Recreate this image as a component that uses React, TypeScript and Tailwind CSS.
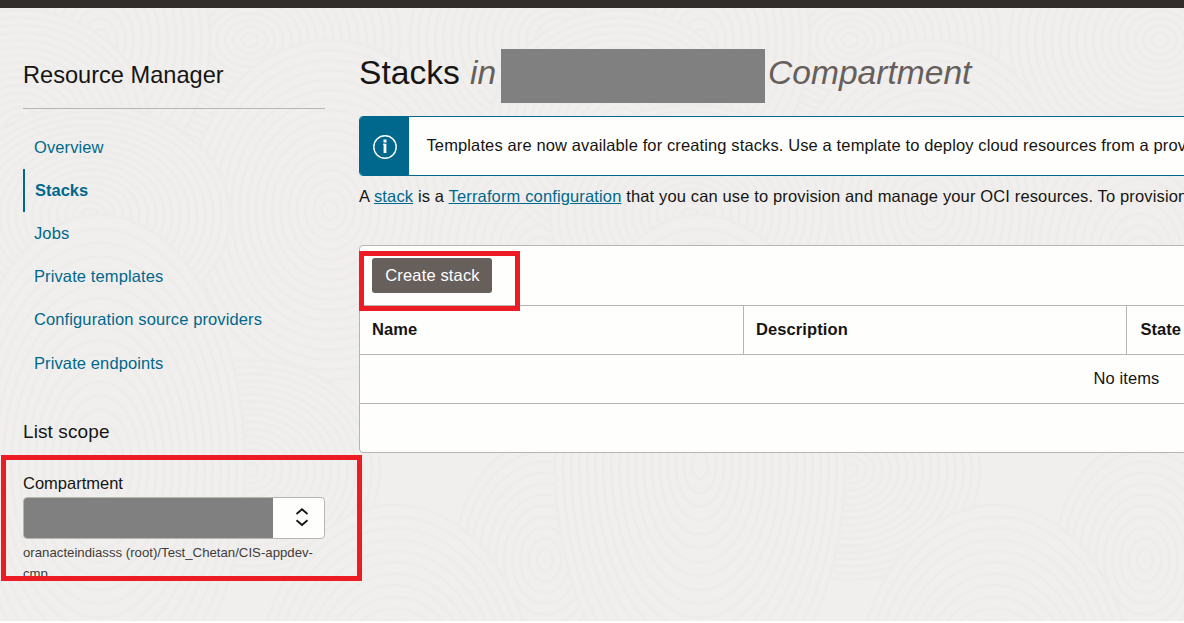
import React from "react";

type Ripple = { x: number; y: number; rx: number; ry: number };

const TILE = 600;

const ripples: Ripple[] = [
  { x: 560, y: 40, rx: 150, ry: 130 },
  { x: 250, y: 40, rx: 150, ry: 120 },
  { x: 100, y: 40, rx: 110, ry: 140 },
  { x: 330, y: 210, rx: 140, ry: 170 },
  { x: 540, y: 260, rx: 110, ry: 150 },
  { x: 20, y: 130, rx: 130, ry: 120 },
  { x: 90, y: 215, rx: 140, ry: 110 },
  { x: 250, y: 470, rx: 130, ry: 110 },
  { x: 545, y: 560, rx: 90, ry: 120 },
  { x: 100, y: 465, rx: 145, ry: 250 },
  { x: 395, y: 700, rx: 140, ry: 195 },
];

function RippleBackdrop() {
  const offsets = [-TILE, 0, TILE];
  return (
    <svg className="absolute inset-0 h-full w-full" aria-hidden="true">
      {ripples.map((r, i) =>
        offsets.map((dx) => {
          const count = Math.floor(r.rx / 8);
          return (
            <g key={`${i}-${dx}`}>
              {Array.from({ length: count }, (_, k) => {
                const f = 1 - k / count;
                return (
                  <ellipse
                    key={k}
                    cx={r.x + dx}
                    cy={r.y}
                    rx={r.rx * f}
                    ry={r.ry * f}
                    fill="#f0efed"
                    stroke="#edecea"
                    strokeWidth="3"
                  />
                );
              })}
            </g>
          );
        })
      )}
    </svg>
  );
}

const links = [
  { label: "Overview" },
  { label: "Stacks", active: true },
  { label: "Jobs" },
  { label: "Private templates" },
  { label: "Configuration source providers" },
  { label: "Private endpoints" },
];

function Sidebar() {
  return (
    <aside className="w-[302px] shrink-0">
      <h2 className="flex h-[101px] items-center border-b border-[#b8b4b0] pt-[36px] text-[23.6px]">
        Resource Manager
      </h2>
      <nav className="mt-[17px] flex h-[259px] flex-col text-[16.5px] tracking-[0.11px] text-[#00688c]">
        {links.map((l) => (
          <a
            key={l.label}
            className={
              l.active
                ? "flex h-[43px] items-center border-l-2 border-[#00688c] pl-[10px] font-bold tracking-normal"
                : "flex h-[43px] items-center pl-[11px] last:h-[44px] last:pt-px"
            }
          >
            {l.label}
          </a>
        ))}
      </nav>
      <h3 className="mt-[34px] text-[19px] leading-[26px] tracking-[0.1px]">List scope</h3>
      <div className="mt-[27px] text-[16.5px] leading-[22px]">Compartment</div>
      <div className="mt-[3px] flex h-[42px] justify-between overflow-hidden rounded border border-[#b8b4b0] bg-[#fefefc]">
        <div className="-my-px w-[249px] bg-[#808080]" />
        <svg className="mt-[9px] mr-[15px] h-5 w-[14px]" viewBox="0 0 14 20" fill="none" stroke="#161513" strokeWidth="1.8">
          <path d="M1.5 7 7 2.2 12.5 7M1.5 13.2 7 18l5.5-4.8" />
        </svg>
      </div>
      <div className="mt-[3px] h-[37px] text-[13.2px] leading-[21px] tracking-[0.01px] text-[#3f3b38]">
        oranacteindiasss (root)/Test_Chetan/CIS-appdev-
        <br />
        cmp
      </div>
    </aside>
  );
}

function Banner() {
  return (
    <div className="mt-[13px] flex h-[60px] w-[900px] overflow-hidden rounded border border-[#00688c] bg-[#fefefc]">
      <div className="flex w-[49px] items-center justify-center bg-[#00688c] pt-[2px]">
        <svg className="h-6 w-6" viewBox="0 0 24 24" fill="none" stroke="#fff">
          <circle cx="12" cy="12" r="11.2" strokeWidth="1.4" />
          <path d="M12 8.8v9.2" strokeWidth="2.8" />
          <path d="M10 9.300h2" strokeWidth="1" />
          <path d="M12 4.500v3" strokeWidth="3" />
        </svg>
      </div>
      <p className="pl-[17.5px] text-[16.5px] leading-[56px] tracking-[0.12px] whitespace-nowrap">
        Templates are now available for creating stacks. Use a template to deploy cloud resources from a provided
      </p>
    </div>
  );
}

function StackTable() {
  return (
    <section className="mt-[38px] w-[1534px] rounded border border-[#b8b4b0] bg-[#fefefc] text-[16.5px]">
      <div className="h-[59px] pt-3 pl-3">
        <button className="h-[35px] w-[120px] rounded-[3px] bg-[#665f5b] pl-[1px] tracking-[0.15px] text-white">Create stack</button>
      </div>
      <div className="flex h-[50px] border-y border-[#b8b4b0] leading-[47px] font-bold tracking-[0.1px]">
        <div className="w-[384px] border-r border-[#b8b4b0] pl-3">Name</div>
        <div className="w-[383px] border-r border-[#b8b4b0] pl-3">Description</div>
        <div className="pl-[13.5px] tracking-normal">State</div>
      </div>
      <div className="h-[49px] border-b border-[#b8b4b0] pl-[1px] text-center leading-[47px] tracking-[0.1px]">No items</div>
      <div className="h-[48px]" />
    </section>
  );
}

export default function App() {
  return (
    <div className="relative h-[623px] w-full overflow-hidden border-b-2 border-[#fefefe] bg-[#f0efed] font-['Liberation_Sans',Arial,sans-serif] text-[#161513]">
      <RippleBackdrop />
      <div className="relative">
        <header className="h-2 bg-[#312d2a]" />
        <div className="flex gap-[34px] pl-[23px]">
          <Sidebar />
          <main className="min-w-0 flex-1">
            <h1 className="flex h-[95px] items-start pt-[41px] text-[33.6px] leading-[48px] whitespace-nowrap">
              <span className="w-[111px] shrink-0">Stacks</span>
              <em className="w-[31px] shrink-0 text-[#665f5b]">in</em>
              <span className="mr-[3px] h-[54px] w-[264px] shrink-0 bg-[#808080]" />
              <em className="text-[#665f5b]">Compartment</em>
            </h1>
            <Banner />
            <p className="mt-[9px] text-[16.5px] leading-[22px] tracking-[0.14px] whitespace-nowrap">
              A <a className="text-[#00688c] underline">stack</a> is a{" "}
              <a className="text-[#00688c] underline">Terraform configuration</a> that you can use to provision and
              manage your OCI resources. To provision resources
            </p>
            <StackTable />
          </main>
        </div>
      </div>
      <div className="pointer-events-none absolute top-[455px] left-[1px] h-[126px] w-[361px] border-5 border-[#ed1c24]" />
      <div className="pointer-events-none absolute top-[251px] left-[359px] h-[60px] w-[161px] border-5 border-[#ed1c24]" />
    </div>
  );
}
